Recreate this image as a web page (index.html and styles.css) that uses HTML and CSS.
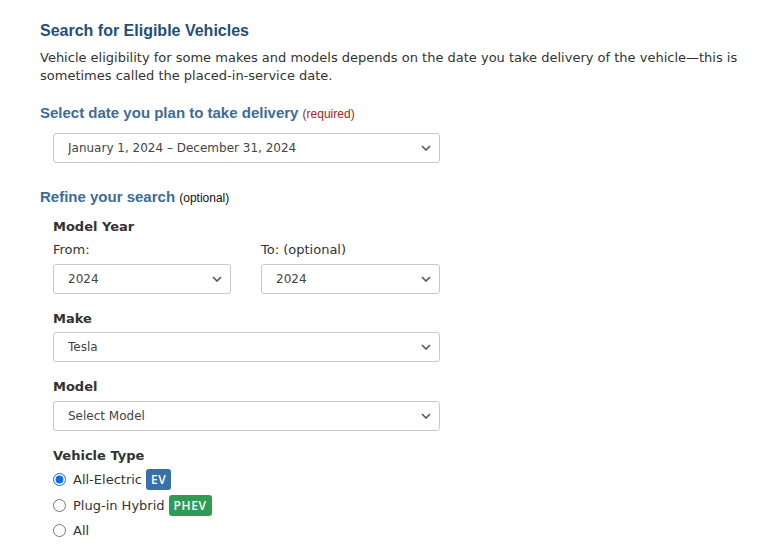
FILE: index.html
```html
<!DOCTYPE html>
<html lang="en">
<head>
<meta charset="UTF-8">
<meta name="viewport" content="width=device-width, initial-scale=1.0">
<title>Search for Eligible Vehicles</title>
<link rel="stylesheet" href="styles.css">
</head>
<body>

<div class="search-panel">
  <h2 class="panel-title">Search for Eligible Vehicles</h2>
  <p class="intro">Vehicle eligibility for some makes and models depends on the date you take delivery of the vehicle&mdash;this is sometimes called the placed-in-service date.</p>

  <!-- Delivery date -->
  <h3 class="section-title">Select date you plan to take delivery <span class="required">(required)</span></h3>
  <div class="field-group">
    <div class="select-wrap">
      <select id="deliveryDate">
        <option>January 1, 2024 &ndash; December 31, 2024</option>
      </select>
      <svg class="chevron" width="10" height="6" viewBox="0 0 10 6"><path d="M1 1l4 4 4-4" fill="none" stroke="#555" stroke-width="1.6"/></svg>
    </div>
  </div>

  <!-- Refine -->
  <h3 class="section-title refine">Refine your search <span class="optional">(optional)</span></h3>
  <div class="field-group refine-fields">
    <div class="field-label">Model Year</div>
    <div class="year-row">
      <div>
        <label class="sub-label" for="yearFrom">From:</label>
        <div class="select-wrap">
          <select id="yearFrom"><option>2024</option></select>
          <svg class="chevron" width="10" height="6" viewBox="0 0 10 6"><path d="M1 1l4 4 4-4" fill="none" stroke="#555" stroke-width="1.6"/></svg>
        </div>
      </div>
      <div>
        <label class="sub-label" for="yearTo">To: (optional)</label>
        <div class="select-wrap">
          <select id="yearTo"><option>2024</option></select>
          <svg class="chevron" width="10" height="6" viewBox="0 0 10 6"><path d="M1 1l4 4 4-4" fill="none" stroke="#555" stroke-width="1.6"/></svg>
        </div>
      </div>
    </div>

    <label class="field-label spaced" for="make">Make</label>
    <div class="select-wrap">
      <select id="make"><option>Tesla</option></select>
      <svg class="chevron" width="10" height="6" viewBox="0 0 10 6"><path d="M1 1l4 4 4-4" fill="none" stroke="#555" stroke-width="1.6"/></svg>
    </div>

    <label class="field-label spaced model-label" for="model">Model</label>
    <div class="select-wrap">
      <select id="model"><option>Select Model</option></select>
      <svg class="chevron" width="10" height="6" viewBox="0 0 10 6"><path d="M1 1l4 4 4-4" fill="none" stroke="#555" stroke-width="1.6"/></svg>
    </div>

    <div class="field-label spaced">Vehicle Type</div>
    <div class="radio-list">
      <label class="radio-row"><input type="radio" name="vtype" checked> All-Electric <span class="badge ev">EV</span></label>
      <label class="radio-row"><input type="radio" name="vtype"> Plug-in Hybrid <span class="badge phev">PHEV</span></label>
      <label class="radio-row"><input type="radio" name="vtype"> All</label>
    </div>
  </div>
</div>

</body>
</html>
```

FILE: styles.css
```css
  /* Page */
  body {
    margin: 0;
    background-color: #fff;
    font-family: 'DejaVu Sans', Verdana, sans-serif;
    font-size: 13px;
    color: #333;
  }

  .search-panel {
    padding: 21px 30px 0 40px;
  }

  /* Headings */
  .panel-title {
    margin: 0;
    font-family: 'Liberation Sans', Arial, sans-serif;
    font-size: 16px;
    line-height: 20px;
    font-weight: bold;
    color: #1f4f7b;
  }

  .intro {
    margin: 8px 0 0;
    line-height: 18px;
  }

  .section-title {
    margin: 18px 0 0;
    font-family: 'Liberation Sans', Arial, sans-serif;
    font-size: 15px;
    line-height: 20px;
    font-weight: bold;
    color: #3d6c9b;
  }

  .section-title.refine {
    margin-top: 24px;
  }

  .required {
    font-size: 12px;
    font-weight: normal;
    color: #a52222;
  }

  .optional {
    font-size: 12px;
    font-weight: normal;
    color: #111;
  }

  /* Fields */
  .field-group {
    width: 387px;
    padding-left: 13px;
    margin-top: 9px;
  }

  .field-group.refine-fields {
    margin-top: 10px;
  }

  .field-label {
    display: block;
    font-weight: bold;
    line-height: 18px;
    color: #333;
  }

  .field-label.spaced {
    margin-top: 16px;
    margin-bottom: 4px;
  }

  .field-label.model-label {
    margin-bottom: 5px;
  }

  .sub-label {
    display: block;
    line-height: 18px;
    margin: 5px 0 5px;
  }

  .year-row {
    display: grid;
    grid-template-columns: 178px 1fr;
    column-gap: 30px;
  }

  .select-wrap {
    position: relative;
  }

  .select-wrap select {
    appearance: none;
    -webkit-appearance: none;
    width: 100%;
    height: 30px;
    padding: 0 28px 0 14px;
    border: 1px solid #c9c9c9;
    border-radius: 3px;
    background-color: #fff;
    font-family: 'DejaVu Sans', Verdana, sans-serif;
    font-size: 12px;
    color: #444;
    outline: none;
  }

  .chevron {
    position: absolute;
    right: 9px;
    top: 12px;
    pointer-events: none;
  }

  /* Radios */
  .radio-list {
    margin-top: -2px;
  }

  .radio-row {
    display: flex;
    align-items: center;
    height: 25.5px;
  }

  .radio-row input {
    width: 13px;
    height: 13px;
    margin: 0 7px 0 0;
    accent-color: #0b6fe0;
  }

  .badge {
    display: inline-block;
    margin-left: 4px;
    padding: 0 5px;
    height: 21px;
    line-height: 21px;
    border-radius: 3px;
    font-family: 'Open Sans', sans-serif;
    font-size: 12px;
    font-weight: 600;
    letter-spacing: 0.6px;
    color: #fff;
  }

  .badge.ev {
    background-color: #3a70aa;
  }

  .badge.phev {
    background-color: #2f9c55;
  }
```
